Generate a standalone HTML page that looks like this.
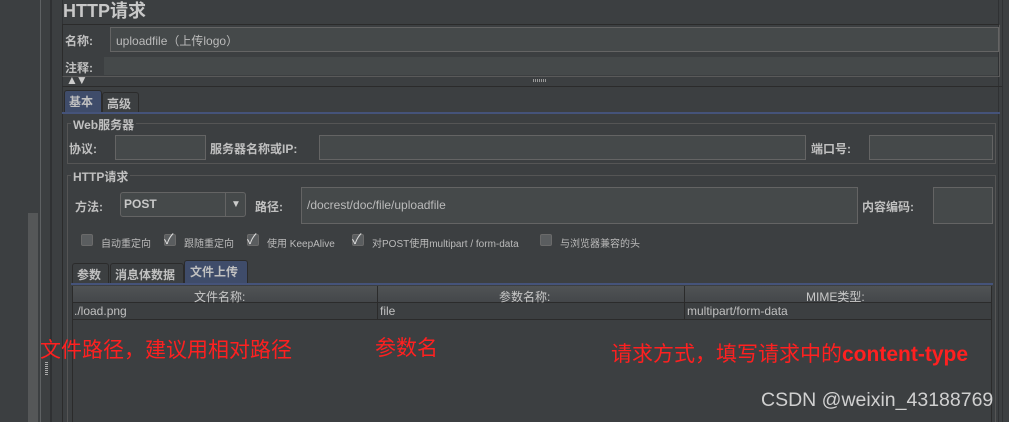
<!DOCTYPE html>
<html><head><meta charset="utf-8"><style>
*{margin:0;padding:0;box-sizing:border-box}
html,body{width:1009px;height:422px;overflow:hidden}
body{background:#3c3f41;position:relative;font-family:"Liberation Sans","Noto Sans CJK SC",sans-serif;color:#bbbbbb}
.a{position:absolute}
.f{position:absolute;background:#45494a;border:1px solid #646464}
.l{position:absolute;font-size:12px;font-weight:bold;color:#c0c0c0;white-space:nowrap}
.g{position:absolute;border:1px solid #555;border-top:1px solid #555}
.gt{position:absolute;background:#3c3f41;font-size:12px;font-weight:bold;color:#c0c0c0;padding:0 2px}
.cb{position:absolute;width:12px;height:12px;background:#5a5d5f;border:1px solid #6a6a6a;border-radius:2px}
.ck{position:absolute;font-size:10px;color:#bbb;white-space:nowrap}
.red{position:absolute;color:#ff2020;font-size:21px;white-space:nowrap}
</style></head><body>
<div class="a" style="left:28px;top:213px;width:10px;height:209px;background:#555758"></div>
<div class="a" style="left:40px;top:0;width:1px;height:422px;background:#5e6163"></div>
<div class="a" style="left:50px;top:0;width:2px;height:422px;background:#2f3133"></div>
<div class="a" style="left:62px;top:0;width:1px;height:422px;background:#2f3133"></div>
<div class="a" style="left:45px;top:362px;width:3px;height:14px;background:repeating-linear-gradient(#aaa 0 1px,transparent 1px 2px)"></div>
<div class="a" style="left:998px;top:0;width:1px;height:422px;background:#2f3133"></div>
<div class="a" style="left:1002px;top:0;width:1px;height:422px;background:#2f3133"></div>

<div class="a" style="left:63px;top:-3px;font-size:18px;font-weight:bold;color:#c8c8c8">HTTP请求</div>
<div class="a" style="left:62px;top:24px;width:938px;height:53px;border:1px solid #2b2b2b;border-right-color:#5a5a5a;border-bottom-color:#5a5a5a"></div>
<div class="l" style="left:65px;top:32px">名称:</div>
<div class="f" style="left:110px;top:27px;width:889px;height:25px"></div>
<div class="a" style="left:116px;top:32px;font-size:12px;color:#bbb">uploadfile（上传logo）</div>
<div class="l" style="left:65px;top:59px">注释:</div>
<div class="a" style="left:104px;top:57px;width:894px;height:18px;background:#45494a"></div>
<div class="a" style="left:66px;top:73px;font-size:12px;color:#ccc;letter-spacing:-2px">▲▼</div>
<div class="a" style="left:533px;top:79px;width:14px;height:3px;background:repeating-linear-gradient(90deg,#999 0 1px,transparent 1px 2px)"></div>
<div class="a" style="left:62px;top:86px;width:940px;height:1px;background:#2b2b2b"></div>

<div class="a" style="left:64px;top:90px;width:38px;height:22px;background:#3f4c6a;border:1px solid #2b2b2b;border-bottom:none;border-radius:3px 3px 0 0"></div>
<div class="l" style="left:69px;top:93px">基本</div>
<div class="a" style="left:102px;top:92px;width:37px;height:20px;border:1px solid #2b2b2b;border-bottom:none;border-radius:3px 3px 0 0"></div>
<div class="l" style="left:107px;top:95px">高级</div>
<div class="a" style="left:62px;top:112px;width:938px;height:2px;background:#45537a"></div>
<div class="a" style="left:62px;top:114px;width:1px;height:308px;background:#2b2b2b"></div>

<div class="g" style="left:67px;top:123px;width:929px;height:41px"></div>
<div class="gt" style="left:71px;top:116px">Web服务器</div>
<div class="l" style="left:69px;top:140px">协议:</div>
<div class="f" style="left:115px;top:135px;width:91px;height:25px"></div>
<div class="l" style="left:210px;top:140px">服务器名称或IP:</div>
<div class="f" style="left:319px;top:135px;width:487px;height:25px"></div>
<div class="l" style="left:811px;top:140px">端口号:</div>
<div class="f" style="left:869px;top:135px;width:124px;height:25px"></div>

<div class="g" style="left:67px;top:175px;width:929px;height:250px"></div>
<div class="gt" style="left:71px;top:168px">HTTP请求</div>
<div class="l" style="left:75px;top:198px">方法:</div>
<div class="f" style="left:120px;top:192px;width:126px;height:25px;border-radius:3px;background:#45494a"></div>
<div class="a" style="left:225px;top:193px;width:1px;height:23px;background:#646464"></div>
<div class="a" style="left:231px;top:199px;font-size:10px;color:#ccc">▼</div>
<div class="a" style="left:124px;top:197px;font-size:12px;font-weight:bold;color:#c8c8c8">POST</div>
<div class="l" style="left:255px;top:198px">路径:</div>
<div class="f" style="left:301px;top:187px;width:557px;height:37px"></div>
<div class="a" style="left:307px;top:198px;font-size:12px;color:#bbb">/docrest/doc/file/uploadfile</div>
<div class="l" style="left:862px;top:198px">内容编码:</div>
<div class="f" style="left:933px;top:187px;width:60px;height:37px"></div>

<div class="cb" style="left:81px;top:234px"></div><div class="ck" style="left:101px;top:235px">自动重定向</div>
<div class="cb" style="left:164px;top:234px"></div><div class="a" style="left:164px;top:229px;font-size:14px;color:#ddd">✓</div><div class="ck" style="left:184px;top:235px">跟随重定向</div>
<div class="cb" style="left:247px;top:234px"></div><div class="a" style="left:247px;top:229px;font-size:14px;color:#ddd">✓</div><div class="ck" style="left:267px;top:235px">使用 KeepAlive</div>
<div class="cb" style="left:352px;top:234px"></div><div class="a" style="left:352px;top:229px;font-size:14px;color:#ddd">✓</div><div class="ck" style="left:372px;top:235px">对POST使用multipart / form-data</div>
<div class="cb" style="left:540px;top:234px"></div><div class="ck" style="left:560px;top:235px">与浏览器兼容的头</div>

<div class="a" style="left:72px;top:263px;width:37px;height:20px;border:1px solid #2b2b2b;border-bottom:none;border-radius:3px 3px 0 0"></div>
<div class="l" style="left:77px;top:266px">参数</div>
<div class="a" style="left:110px;top:263px;width:74px;height:20px;border:1px solid #2b2b2b;border-bottom:none;border-radius:3px 3px 0 0"></div>
<div class="l" style="left:115px;top:266px">消息体数据</div>
<div class="a" style="left:184px;top:260px;width:64px;height:23px;background:#3f4c6a;border:1px solid #2b2b2b;border-bottom:none;border-radius:3px 3px 0 0"></div>
<div class="l" style="left:190px;top:263px">文件上传</div>
<div class="a" style="left:71px;top:283px;width:922px;height:2px;background:#45537a"></div>

<div class="a" style="left:72px;top:286px;width:920px;height:17px;background:linear-gradient(#505355,#44474a);border-bottom:1px solid #2b2b2b"></div>
<div class="a" style="left:377px;top:286px;width:1px;height:34px;background:#2b2b2b"></div>
<div class="a" style="left:684px;top:286px;width:1px;height:34px;background:#2b2b2b"></div>
<div class="a" style="left:991px;top:286px;width:1px;height:136px;background:#2b2b2b"></div>
<div class="a" style="left:72px;top:286px;width:1px;height:136px;background:#2b2b2b"></div>
<div class="a" style="left:194px;top:288px;font-size:12px;color:#c8c8c8">文件名称:</div>
<div class="a" style="left:499px;top:288px;font-size:12px;color:#c8c8c8">参数名称:</div>
<div class="a" style="left:806px;top:288px;font-size:12px;color:#c8c8c8">MIME类型:</div>
<div class="a" style="left:72px;top:319px;width:920px;height:1px;background:#2b2b2b"></div>
<div class="a" style="left:74px;top:304px;font-size:12px;color:#c0c0c0">./load.png</div>
<div class="a" style="left:380px;top:304px;font-size:12px;color:#c0c0c0">file</div>
<div class="a" style="left:687px;top:304px;font-size:12px;color:#c0c0c0">multipart/form-data</div>

<div class="red" style="left:40px;top:334px">文件路径，建议用相对路径</div>
<div class="red" style="left:375px;top:332px">参数名</div>
<div class="red" style="left:611px;top:338px">请求方式，填写请求中的<b>content-type</b></div>
<div class="a" style="left:761px;top:389px;font-size:19.5px;color:#d0d0d0;white-space:nowrap">CSDN @weixin_43188769</div>
</body></html>
